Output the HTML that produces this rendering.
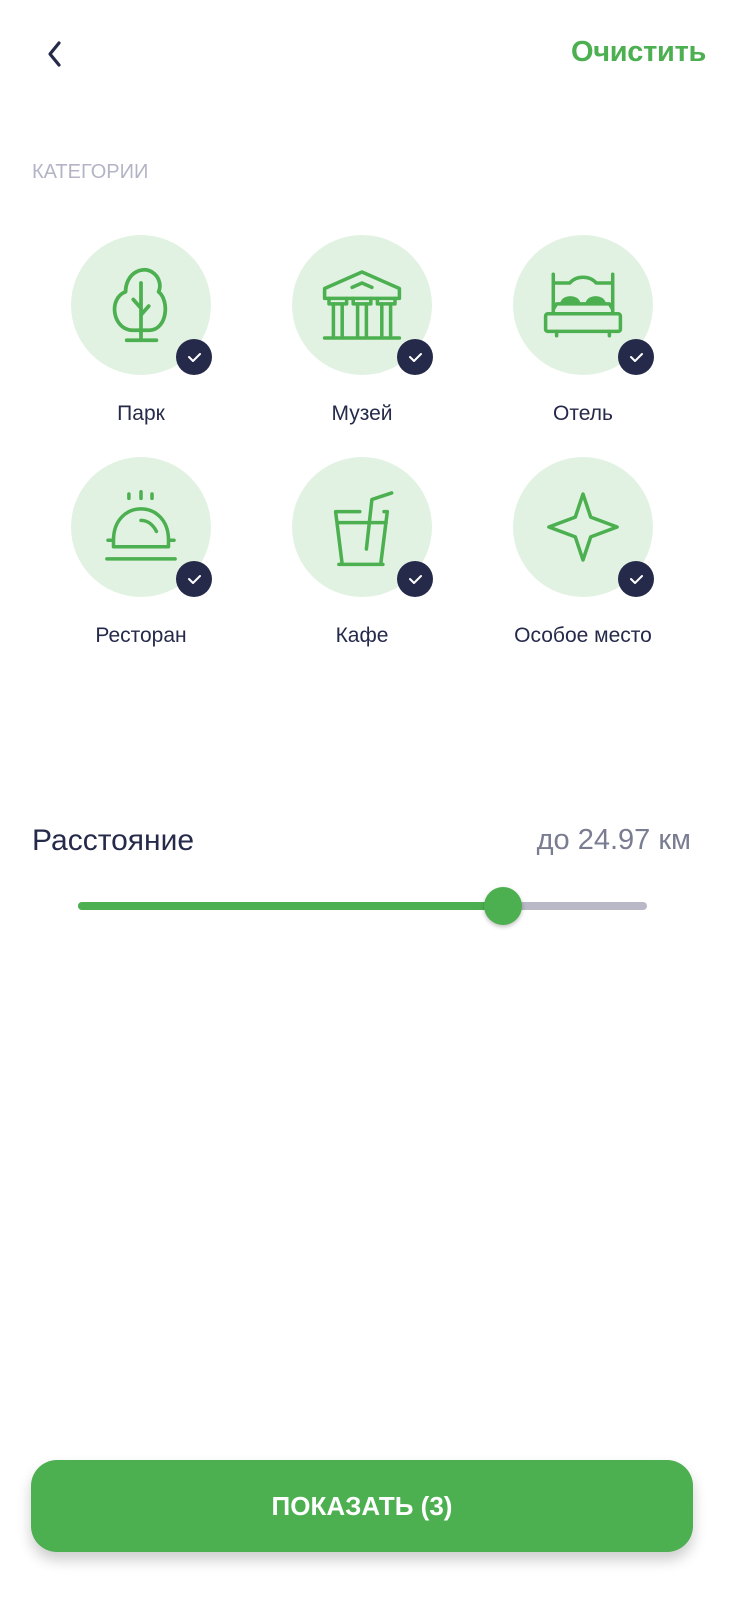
<!DOCTYPE html>
<html><head><meta charset="utf-8"><style>
*{margin:0;padding:0;box-sizing:border-box}
body{width:750px;height:1624px;background:#fff;position:relative;overflow:hidden;font-family:"Liberation Sans",sans-serif}
.abs{position:absolute}
.circ{position:absolute;width:140px;height:140px;border-radius:50%;background:#e1f2e2}
.badge{position:absolute;width:36px;height:36px;border-radius:50%;background:#262a4a}
.lbl{position:absolute;width:220px;text-align:center;font-size:21px;color:#262a4a}
svg.ic{position:absolute;width:88px;height:88px;overflow:visible}
</style></head><body>
<svg class="abs" style="left:40px;top:38px" width="30" height="32" viewBox="0 0 30 32"><path d="M19 5 L10 16 L19 27" fill="none" stroke="#262a4a" stroke-width="3.2" stroke-linecap="round" stroke-linejoin="round"/></svg>
<div class="abs" style="right:44px;top:36px;font-size:29px;font-weight:bold;color:#4caf50;letter-spacing:-0.3px">Очистить</div>
<div class="abs" style="left:32px;top:161px;font-size:20px;color:#b4b4c6">КАТЕГОРИИ</div>

<div class="circ" style="left:71px;top:235px"></div>
<div class="circ" style="left:292px;top:235px"></div>
<div class="circ" style="left:513px;top:235px"></div>
<div class="circ" style="left:71px;top:457px"></div>
<div class="circ" style="left:292px;top:457px"></div>
<div class="circ" style="left:513px;top:457px"></div>

<svg class="ic" style="left:97px;top:261px" viewBox="-40 -40 80 80" fill="none" stroke="#4caf50" stroke-width="3.4" stroke-linecap="round" stroke-linejoin="round">
<path d="M-14,-12 C-14,-28 0,-36 10,-30 C18,-25 18,-16 16,-12 C26,-4 24,22 8,23 L-8,23 C-26,22 -30,-6 -14,-12 Z"/>
<path d="M0,-20 V32 M-13,32 H14 M-7,-5 L0,3 M7,1 L0,9"/>
</svg>
<svg class="ic" style="left:318px;top:261px" viewBox="-40 -40 80 80" fill="none" stroke="#4caf50" stroke-width="3.2" stroke-linecap="round" stroke-linejoin="round">
<path d="M0,-30 L-34,-15 V-6 H34 V-15 Z M-9,-16 L0,-20 L9,-16"/>
<path d="M-30,-6 V-1 H-14 V-6 M-8,-6 V-1 H8 V-6 M14,-6 V-1 H30 V-6"/>
<path d="M-26,-1 V28 M-18,-1 V28 M-4,-1 V28 M4,-1 V28 M18,-1 V28 M26,-1 V28 M-34,30 H34"/>
</svg>
<svg class="ic" style="left:539px;top:261px" viewBox="-40 -40 80 80" fill="none" stroke="#4caf50" stroke-width="3.2" stroke-linecap="round" stroke-linejoin="round">
<path d="M-27,-28 V8 M27,-28 V8 M-27,-20 H-12 C-6,-27 6,-27 12,-20 H27"/>
<path d="M-19,-2 C-17,-8 -6,-8 -4,-2 Z M4,-2 C6,-8 17,-8 19,-2 Z" fill="#4caf50"/>
<path d="M-27,4 L-24,-1 H24 L27,4"/>
<rect x="-34" y="8" width="68" height="16" rx="2"/>
<path d="M-24,24 V28 M24,24 V28"/>
</svg>

<svg class="ic" style="left:97px;top:483px" viewBox="-40 -40 80 80" fill="none" stroke="#4caf50" stroke-width="3.2" stroke-linecap="round" stroke-linejoin="round">
<path d="M-11,-30 V-26 M0,-32 V-26 M10,-30 V-26"/>
<path d="M-25,18 V12 C-25,-26 25,-26 25,12 V18 Z M-31,29 H31 M-30,12 H-26 M26,12 H30"/>
<path d="M0,-6 C6,-6 11,-2 14,4"/>
</svg>
<svg class="ic" style="left:318px;top:483px" viewBox="-40 -40 80 80" fill="none" stroke="#4caf50" stroke-width="3.2" stroke-linecap="round" stroke-linejoin="round">
<path d="M-2,-14 H-24 L-18,34 H17 L23,-14 H20 M-22,-4 H22 M-21,34 H19"/>
<path d="M4,20 L9,-25 L27,-31"/>
</svg>
<svg class="ic" style="left:539px;top:483px" viewBox="-40 -40 80 80" fill="none" stroke="#4caf50" stroke-width="3.2" stroke-linecap="round" stroke-linejoin="round">
<path d="M0,-30 L7,-9 L31,0 L7,9 L0,30 L-7,9 L-31,0 L-7,-9 Z"/>
</svg>

<div class="badge" style="left:176px;top:339px"></div>
<div class="badge" style="left:397px;top:339px"></div>
<div class="badge" style="left:618px;top:339px"></div>
<div class="badge" style="left:176px;top:561px"></div>
<div class="badge" style="left:397px;top:561px"></div>
<div class="badge" style="left:618px;top:561px"></div>
<svg class="abs" style="left:0;top:0" width="750" height="700" viewBox="0 0 750 700" fill="none" stroke="#fff" stroke-width="2" stroke-linecap="round" stroke-linejoin="round">
<path d="M189,357 l4,4 l7,-7 M410,357 l4,4 l7,-7 M631,357 l4,4 l7,-7 M189,579 l4,4 l7,-7 M410,579 l4,4 l7,-7 M631,579 l4,4 l7,-7"/>
</svg>

<div class="lbl" style="left:31px;top:402px">Парк</div>
<div class="lbl" style="left:252px;top:402px">Музей</div>
<div class="lbl" style="left:473px;top:402px">Отель</div>
<div class="lbl" style="left:31px;top:624px">Ресторан</div>
<div class="lbl" style="left:252px;top:624px">Кафе</div>
<div class="lbl" style="left:473px;top:624px">Особое место</div>

<div class="abs" style="left:32px;top:824px;font-size:30px;color:#262a4a">Расстояние</div>
<div class="abs" style="right:59px;top:824px;font-size:29px;color:#7a7d92">до 24.97 км</div>
<div class="abs" style="left:78px;top:902px;width:569px;height:8px;border-radius:4px;background:#b8b8c6"></div>
<div class="abs" style="left:78px;top:902px;width:425px;height:8px;border-radius:4px;background:#4caf50"></div>
<div class="abs" style="left:484px;top:887px;width:38px;height:38px;border-radius:50%;background:#4caf50;box-shadow:0 2px 4px rgba(0,0,0,.25)"></div>

<div class="abs" style="left:31px;top:1460px;width:662px;height:92px;border-radius:26px;background:#4caf50;box-shadow:0 8px 14px rgba(0,0,0,.2);color:#fff;font-weight:bold;font-size:26px;text-align:center;line-height:92px">ПОКАЗАТЬ (3)</div>
</body></html>
